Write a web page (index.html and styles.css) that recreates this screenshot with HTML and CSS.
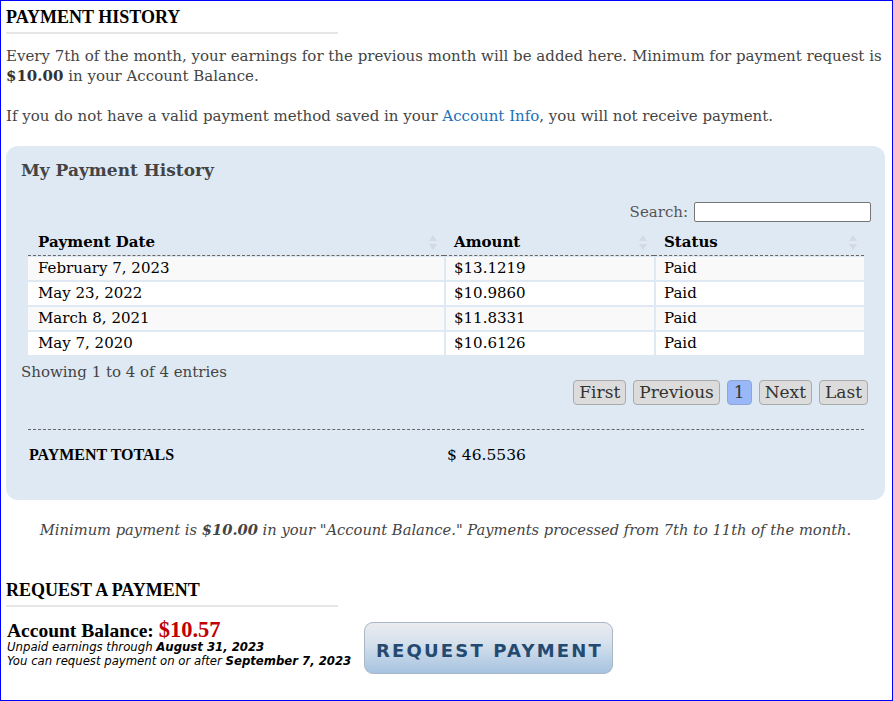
FILE: index.html
```html
<!DOCTYPE html>
<html>
<head>
<meta charset="utf-8">
<link rel="stylesheet" href="styles.css">
</head>
<body>
<div class="frame">
  <h2 class="section-title">PAYMENT HISTORY</h2>
  <p class="intro">Every 7th of the month, your earnings for the previous month will be added here. Minimum for payment request is <b>$10.00</b> in your Account Balance.</p>
  <p class="intro">If you do not have a valid payment method saved in your <a href="#" class="link">Account Info</a>, you will not receive payment.</p>

  <div class="panel">
    <h3 class="panel-title">My Payment History</h3>
    <div class="search-row">
      <label class="search-label">Search: <input class="search-input" type="text"></label>
    </div>
    <table class="history">
      <thead>
        <tr>
          <th class="c1"><div class="th-in"><span>Payment Date</span><svg class="sort" width="8" height="15" viewBox="0 0 8 15"><path d="M4 0 L8 6 L0 6 Z M4 15 L8 9 L0 9 Z" fill="#d3dae2"/></svg></div></th>
          <th class="c2"><div class="th-in"><span>Amount</span><svg class="sort" width="8" height="15" viewBox="0 0 8 15"><path d="M4 0 L8 6 L0 6 Z M4 15 L8 9 L0 9 Z" fill="#d3dae2"/></svg></div></th>
          <th class="c3"><div class="th-in"><span>Status</span><svg class="sort" width="8" height="15" viewBox="0 0 8 15"><path d="M4 0 L8 6 L0 6 Z M4 15 L8 9 L0 9 Z" fill="#d3dae2"/></svg></div></th>
        </tr>
      </thead>
      <tbody>
        <tr class="odd"><td>February 7, 2023</td><td>$13.1219</td><td>Paid</td></tr>
        <tr class="even"><td>May 23, 2022</td><td>$10.9860</td><td>Paid</td></tr>
        <tr class="odd"><td>March 8, 2021</td><td>$11.8331</td><td>Paid</td></tr>
        <tr class="even"><td>May 7, 2020</td><td>$10.6126</td><td>Paid</td></tr>
      </tbody>
    </table>
    <div class="info">Showing 1 to 4 of 4 entries</div>
    <div class="pager">
      <span class="pbtn">First</span>
      <span class="pbtn">Previous</span>
      <span class="pbtn current">1</span>
      <span class="pbtn">Next</span>
      <span class="pbtn">Last</span>
    </div>
    <div class="totals">
      <span class="totals-label">PAYMENT TOTALS</span>
      <span class="totals-value">$ 46.5536</span>
    </div>
  </div>

  <p class="note">Minimum payment is <b>$10.00</b> in your "Account Balance." Payments processed from 7th to 11th of the month.</p>

  <h2 class="section-title">REQUEST A PAYMENT</h2>
  <div class="request">
    <div class="balance">
      <div class="balance-line">Account Balance: <span class="amount">$10.57</span></div>
      <div class="small">Unpaid earnings through <b>August 31, 2023</b></div>
      <div class="small">You can request payment on or after <b>September 7, 2023</b></div>
    </div>
    <button class="req-btn" type="button">REQUEST PAYMENT</button>
  </div>
</div>
</body>
</html>
```

FILE: styles.css
```css
html, body {
  margin: 0;
  padding: 0;
  background: #fff;
}
.frame {
  box-sizing: border-box;
  width: 893px;
  height: 701px;
  border: 1px solid #0000ff;
  padding: 0 7px 0 5px;
  font-family: "DejaVu Serif", serif;
  font-size: 15px;
  color: #444;
  overflow: hidden;
}
.section-title {
  margin: 0;
  padding: 6px 0 5px 0;
  width: 332px;
  border-bottom: 2px solid #e6e6e6;
  font-family: "Liberation Serif", serif;
  font-weight: bold;
  font-size: 18px;
  line-height: 20px;
  color: #000;
}
.intro {
  margin: 12px 0 0 0;
  line-height: 20px;
}
.intro + .intro {
  margin-top: 20px;
}
.intro b {
  color: #333;
}
.link {
  color: #1d6fb8;
  text-decoration: none;
}
.panel {
  margin-top: 20px;
  background: #dfe9f4;
  border-radius: 12px;
  padding: 12px 14px 16px 15px;
  height: 354px;
  box-sizing: border-box;
}
.panel-title {
  margin: 0;
  font-family: "DejaVu Serif", serif;
  font-weight: bold;
  font-size: 17px;
  line-height: 24px;
  color: #444;
  letter-spacing: 0;
}
.search-row {
  display: flex;
  justify-content: flex-end;
  margin-top: 19px;
  height: 22px;
}
.search-label {
  font-size: 15px;
  line-height: 20px;
  color: #555;
  display: flex;
  align-items: center;
  gap: 6px;
}
.search-input {
  width: 177px;
  height: 20px;
  box-sizing: border-box;
  border: 1px solid #777;
  border-radius: 2px;
  background: #fff;
  margin: 0;
  padding: 0 3px;
}
.history {
  margin: 7px 0 0 7px;
  width: 836px;
  border-collapse: separate;
  border-spacing: 0;
  color: #000;
}
.history th {
  text-align: left;
  font-family: "DejaVu Serif", serif;
  font-weight: bold;
  font-size: 15px;
  line-height: 20px;
  padding: 2px 7px 3px 10px;
  border-bottom: 1px dashed #666;
}
.th-in {
  display: flex;
  justify-content: space-between;
  align-items: center;
}
.sort {
  display: block;
}
.history .c1 { width: 416px; box-sizing: border-box; }
.history .c2 { width: 210px; box-sizing: border-box; }
.history .c3 { width: 210px; box-sizing: border-box; }
.history td {
  height: 23px;
  padding: 0 10px 0 8px;
  border-top: 2px solid #dfe9f4;
  font-size: 15px;
  line-height: 23px;
}
.history td:first-child {
  padding-left: 10px;
}
.history td + td {
  border-left: 2px solid #dfe9f4;
}
.history tbody tr:first-child td {
  border-top-width: 1px;
}
.history tr.odd td { background: #f9f9f9; }
.history tr.even td { background: #ffffff; }
.info {
  margin-top: 7px;
  font-size: 15px;
  line-height: 20px;
  color: #444;
}
.pager {
  display: flex;
  justify-content: flex-end;
  gap: 7px;
  margin-top: -2px;
  margin-right: 3px;
}
.pbtn {
  box-sizing: border-box;
  height: 25px;
  padding: 0 5px;
  border: 1px solid #aaa;
  border-radius: 4px;
  background: #dcdcdc;
  font-size: 17px;
  line-height: 23px;
  color: #333;
}
.pbtn.current {
  background: #9ab7f7;
  border-color: #8fa7d8;
  padding: 0 6px;
}
.totals {
  margin: 24px 7px 0 7px;
  border-top: 1px dashed #666;
  padding: 15px 0 0 1px;
  display: flex;
  color: #000;
}
.totals-label {
  width: 418px;
  font-family: "Liberation Serif", serif;
  font-weight: bold;
  font-size: 16px;
  line-height: 20px;
}
.totals-value {
  font-size: 15.5px;
  line-height: 20px;
}
.note {
  margin: 20px 0 0 0;
  text-align: center;
  font-style: italic;
  font-size: 14.7px;
  line-height: 20px;
}
.note + .section-title {
  margin-top: 34px;
}
.request {
  display: flex;
  align-items: flex-start;
  margin-top: 14px;
  padding-left: 1px;
}
.balance {
  width: 357px;
}
.balance-line {
  font-family: "Liberation Serif", serif;
  font-weight: bold;
  font-size: 19.5px;
  line-height: 18px;
  color: #000;
}
.amount {
  color: #c00000;
  font-size: 22.5px;
}
.small {
  font-family: "DejaVu Sans", sans-serif;
  font-style: italic;
  font-size: 11.7px;
  line-height: 14px;
  color: #000;
}
.req-btn {
  margin-top: 1px;
  width: 249px;
  height: 52px;
  box-sizing: border-box;
  border: 1px solid #a9b6c4;
  border-radius: 9px;
  background: linear-gradient(#e9ecf0 0%, #d6e1ec 40%, #a6c3e1 100%);
  font-family: "DejaVu Sans", sans-serif;
  font-weight: bold;
  font-size: 18px;
  letter-spacing: 2.2px;
  color: #244a70;
  padding: 5px 0 0 2px;
}
```
